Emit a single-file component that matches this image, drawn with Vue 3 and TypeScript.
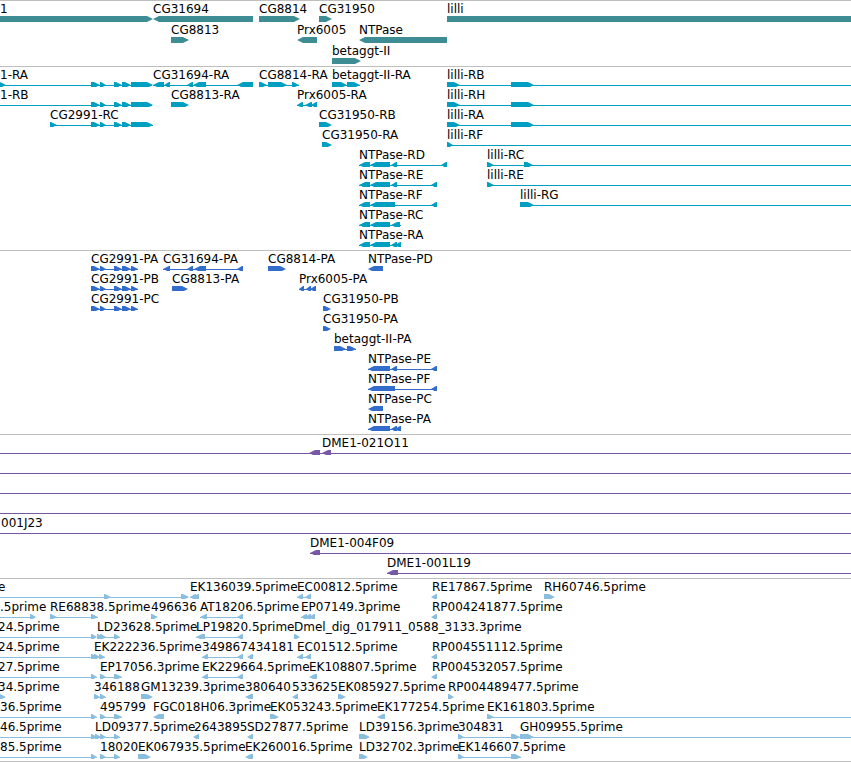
<script setup lang="ts">
type Span = [number, number]

interface Feature {
  name: string
  x: number
  dir: 1 | -1
  exons: Span[]
  line: Span | null
}

interface Track {
  id: string
  label: string
  rowHeight: number
  rows: Feature[][]
}

// Features that continue past the right side of the view are drawn up to here.
const END = 8000
const MID = 18
const TOP = 15
const BOTTOM = 21
const TIP = 6

function feature(name: string, x: number, dir: 1 | -1, exons: Span[], line?: Span): Feature {
  const auto: Span | null = exons.length > 1 ? [exons[0][0], exons[exons.length - 1][1]] : null
  return { name, x, dir, exons, line: line ?? auto }
}

const fwd = (name: string, x: number, exons: Span[], line?: Span) => feature(name, x, 1, exons, line)
const rev = (name: string, x: number, exons: Span[], line?: Span) => feature(name, x, -1, exons, line)

function arrow([a, b]: Span, dir: 1 | -1): string {
  const tip = Math.min(TIP, b - a - 1)
  return dir === 1
    ? `${a},${TOP} ${b - tip},${TOP} ${b},${MID} ${b - tip},${BOTTOM} ${a},${BOTTOM}`
    : `${b},${TOP} ${a + tip},${TOP} ${a},${MID} ${a + tip},${BOTTOM} ${b},${BOTTOM}`
}

const cg2991: Span[] = [[91, 100], [100, 106], [114, 122], [122, 131], [131, 153]]
const cg2991p: Span[] = [[91, 100], [100, 106], [114, 122], [122, 131], [131, 138]]
const lilli: Span[] = [[447, 460], [511, 534]]

const tracks: Track[] = [
  {
    id: 'genes',
    label: 'Genes',
    rowHeight: 21,
    rows: [
      [
        fwd('1', 0, [[-20, 153]]),
        rev('CG31694', 153, [[153, 253]]),
        fwd('CG8814', 259, [[259, 300]]),
        fwd('CG31950', 319, [[319, 332]]),
        fwd('lilli', 447, [[447, END]]),
      ],
      [
        fwd('CG8813', 171, [[171, 189]]),
        rev('Prx6005', 297, [[297, 317]]),
        rev('NTPase', 359, [[359, 447]]),
      ],
      [fwd('betaggt-II', 332, [[332, 361]])],
    ],
  },
  {
    id: 'transcripts',
    label: 'Transcripts',
    rowHeight: 20,
    rows: [
      [
        fwd('1-RA', 0, [[-2, 6], ...cg2991], [-2, 152]),
        rev('CG31694-RA', 153, [[153, 164], [164, 170], [187, 193], [193, 206], [237, 253]]),
        fwd('CG8814-RA', 259, [[259, 267], [268, 287], [292, 299]]),
        fwd('betaggt-II-RA', 332, [[332, 347], [347, 360]]),
        fwd('lilli-RB', 447, lilli, [447, END]),
      ],
      [
        fwd('1-RB', 0, cg2991, [-20, 152]),
        fwd('CG8813-RA', 171, [[171, 189]]),
        rev('Prx6005-RA', 297, [[297, 303], [305, 312], [311, 317]]),
        fwd('lilli-RH', 447, lilli, [447, END]),
      ],
      [
        fwd('CG2991-RC', 50, [[50, 57], ...cg2991]),
        fwd('CG31950-RB', 319, [[319, 332]]),
        fwd('lilli-RA', 447, lilli, [447, END]),
      ],
      [
        fwd('CG31950-RA', 322, [[322, 332]]),
        fwd('lilli-RF', 447, [[447, 453]], [447, END]),
      ],
      [
        rev('NTPase-RD', 359, [[359, 370], [370, 390], [391, 397], [441, 447]]),
        fwd('lilli-RC', 487, [[487, 494], [524, 533]], [487, END]),
      ],
      [
        rev('NTPase-RE', 359, [[359, 370], [370, 390], [391, 397], [431, 437]]),
        fwd('lilli-RE', 487, [[487, 494]], [487, END]),
      ],
      [
        rev('NTPase-RF', 359, [[359, 370], [370, 395], [431, 437]]),
        fwd('lilli-RG', 520, [[520, 534]], [520, END]),
      ],
      [rev('NTPase-RC', 359, [[359, 370], [370, 390], [391, 400]], [359, 401])],
      [rev('NTPase-RA', 359, [[359, 370], [370, 390], [391, 397], [395, 401]])],
    ],
  },
  {
    id: 'proteins',
    label: 'Proteins',
    rowHeight: 20,
    rows: [
      [
        fwd('CG2991-PA', 91, cg2991p),
        rev('CG31694-PA', 163, [[163, 170], [187, 193], [194, 206], [237, 243]]),
        fwd('CG8814-PA', 268, [[268, 286]]),
        rev('NTPase-PD', 368, [[368, 383]]),
      ],
      [
        fwd('CG2991-PB', 91, cg2991p),
        fwd('CG8813-PA', 172, [[172, 188]]),
        rev('Prx6005-PA', 299, [[299, 304], [306, 311], [310, 316]]),
      ],
      [
        fwd('CG2991-PC', 91, cg2991p),
        fwd('CG31950-PB', 323, [[323, 331]]),
      ],
      [fwd('CG31950-PA', 323, [[323, 331]])],
      [fwd('betaggt-II-PA', 334, [[334, 346], [347, 356]])],
      [rev('NTPase-PE', 368, [[368, 390], [391, 397], [431, 437]])],
      [rev('NTPase-PF', 368, [[368, 395], [431, 437]])],
      [rev('NTPase-PC', 368, [[368, 383]])],
      [rev('NTPase-PA', 368, [[368, 390], [391, 397], [395, 401]])],
    ],
  },
  {
    id: 'clones',
    label: 'Clones',
    rowHeight: 20,
    rows: [
      [rev('DME1-021O11', 322, [[309, 320], [322, 331]], [-20, END])],
      [rev('', 0, [], [-20, END])],
      [rev('', 0, [], [-20, END])],
      [rev('', 0, [], [-20, END])],
      [rev('001J23', 1, [], [-20, END])],
      [rev('DME1-004F09', 310, [[310, 320]], [310, END])],
      [rev('DME1-001L19', 387, [[387, 398]], [387, END])],
    ],
  },
  {
    id: 'ests',
    label: 'Expressed sequence tags',
    rowHeight: 20,
    rows: [
      [
        fwd('e', -2, [[104, 111], [181, 189]], [-20, 188]),
        rev('EK136039.5prime', 190, [[190, 196], [193, 199]]),
        rev('EC00812.5prime', 297, [[297, 303], [305, 311]]),
        rev('RE17867.5prime', 432, [[431, 437]]),
        fwd('RH60746.5prime', 544, [[544, 555]]),
      ],
      [
        fwd('.5prime', 0, [[30, 36]], [-20, 35]),
        fwd('RE68838.5prime', 50, [[50, 57], [91, 98]]),
        fwd('496636', 151, [[151, 158]]),
        rev('AT18206.5prime', 200, [[200, 207], [237, 243]]),
        rev('EP07149.3prime', 301, [[301, 307], [305, 311], [309, 315]]),
        rev('RP004241877.5prime', 432, [[431, 437]]),
      ],
      [
        fwd('24.5prime', -2, [[91, 97]], [-20, 96]),
        fwd('LD23628.5prime', 97, [[97, 103], [100, 106], [114, 120]]),
        rev('LP19820.5prime', 196, [[196, 205], [237, 243]]),
        fwd('Dmel_dig_017911_0588_3133.3prime', 294, [[294, 300]]),
      ],
      [
        fwd('24.5prime', -2, [[91, 97]], [-20, 96]),
        fwd('EK222236.5prime', 94, [[94, 100], [99, 105]]),
        rev('349867', 202, [[202, 208], [237, 243]]),
        rev('434181', 248, [[247, 253]]),
        rev('EC01512.5prime', 297, [[297, 303], [305, 311]]),
        rev('RP004551112.5prime', 432, [[431, 437]]),
      ],
      [
        fwd('27.5prime', -2, [[91, 97]], [-20, 97]),
        fwd('EP17056.3prime', 100, [[100, 106], [114, 122]]),
        rev('EK229664.5prime', 202, [[202, 208], [237, 243]]),
        rev('EK108807.5prime', 309, [[309, 317]]),
        rev('RP004532057.5prime', 432, [[431, 437]]),
      ],
      [
        fwd('34.5prime', -2, [[-2, 6]]),
        fwd('346188', 94, [[94, 100], [100, 106]]),
        fwd('GM13239.3prime', 141, [[141, 153]]),
        rev('380640', 245, [[245, 253]]),
        rev('533625', 292, [[292, 298]]),
        fwd('EK085927.5prime', 338, [[338, 346]]),
        fwd('RP004489477.5prime', 448, [[448, 454]]),
      ],
      [
        fwd('36.5prime', 0, [[91, 97]], [-20, 97]),
        fwd('495799', 100, [[100, 106], [114, 122]]),
        rev('FGC018H06.3prime', 153, [[153, 164]]),
        fwd('EK053243.5prime', 270, [[270, 279]]),
        rev('EK177254.5prime', 377, [[377, 385]]),
        fwd('EK161803.5prime', 487, [[487, 494]], [487, END]),
      ],
      [
        fwd('46.5prime', 0, [[91, 97]], [-20, 97]),
        fwd('LD09377.5prime', 95, [[95, 101], [100, 106], [114, 120]]),
        rev('2643895', 194, [[193, 199]]),
        rev('SD27877.5prime', 247, [[247, 253]]),
        fwd('LD39156.3prime', 359, [[359, 370]]),
        fwd('304831', 458, [[458, 464], [511, 520]]),
        fwd('GH09955.5prime', 520, [[520, 534]], [520, END]),
      ],
      [
        fwd('85.5prime', 0, [[91, 97]], [-20, 97]),
        fwd('18020', 100, [[100, 106], [114, 120]]),
        fwd('EK067935.5prime', 138, [[138, 151]]),
        rev('EK260016.5prime', 245, [[245, 253]]),
        fwd('LD32702.3prime', 359, [[359, 368]]),
        fwd('EK146607.5prime', 458, [[458, 464], [511, 521]]),
      ],
    ],
  },
]
</script>

<template>
  <main class="browser">
    <section
      v-for="track in tracks"
      :key="track.id"
      class="track"
      :class="track.id"
      :aria-label="track.label"
    >
      <svg
        v-for="(row, r) in track.rows"
        :key="r"
        class="row"
        width="100%"
        :height="track.rowHeight"
      >
        <g v-for="(f, i) in row" :key="i">
          <rect
            v-if="f.line"
            class="shape"
            :x="f.line[0]"
            :y="MID"
            :width="f.line[1] - f.line[0]"
            height="1"
          />
          <polygon v-for="(exon, e) in f.exons" :key="e" class="shape" :points="arrow(exon, f.dir)" />
        </g>
        <text v-for="(f, i) in row" :key="`t${i}`" class="name" :x="f.x" y="12">{{ f.name }}</text>
      </svg>
    </section>
  </main>
</template>

<style>
body {
  margin: 0;
  background: #ffffff;
}
</style>

<style scoped>
.browser {
  overflow: hidden;
  border-bottom: 1px solid #bebebe;
  font-family: "DejaVu Sans", sans-serif;
  font-size: 12px;
}

.track {
  display: flex;
  flex-direction: column;
  border-top: 1px solid #bebebe;
  padding-bottom: 3px;
}

.genes,
.ests {
  padding-bottom: 2px;
}

.row {
  display: block;
  overflow: hidden;
}

.name {
  fill: #000000;
}

.genes .shape {
  fill: #3f8d94;
}

.transcripts .shape {
  fill: #009fc1;
}

.proteins .shape {
  fill: #326dcc;
}

.clones .shape {
  fill: #7758a6;
}

.ests .shape {
  fill: #8abede;
}
</style>
